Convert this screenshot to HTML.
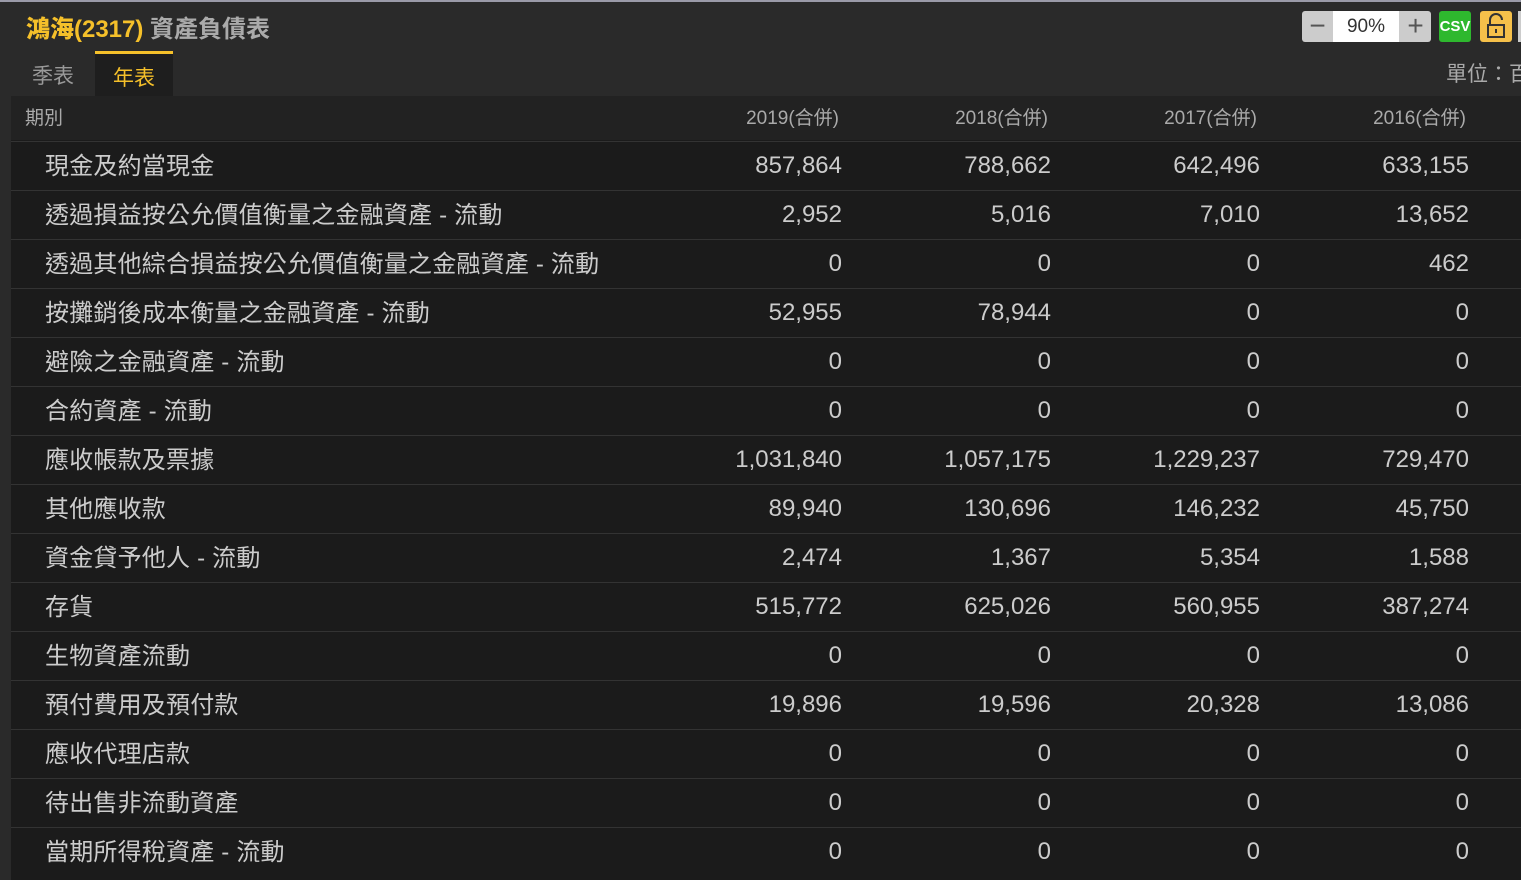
<html><head><style>
body{margin:0;width:1521px;height:873px;overflow:hidden;background:#2a2a2a;font-family:"Liberation Sans","Noto Sans CJK TC",sans-serif;position:relative}
.top{position:absolute;left:0;top:0;width:1521px;height:2px;background:#9a9aa8}
.title{position:absolute;left:26px;top:9px;font-size:24px;font-weight:bold;color:#aaa;white-space:nowrap}
.title b{color:#f5c02a}
.tab{position:absolute;top:52px;height:44px;font-size:21px;line-height:50px;text-align:center}
.t1{left:11px;width:84px;color:#999}
.t2{left:95px;width:78px;color:#f5c02a;background:#1e1e1e;border-top:3px solid #f5c02a;top:51px;height:45px;line-height:50px}
.unit{position:absolute;left:1446px;top:58px;font-size:21px;color:#aaa;white-space:nowrap}
.zoom{position:absolute;left:1302px;top:11px;width:129px;height:31px;background:#ccc;border-radius:3px}
.zoom .v{position:absolute;left:31px;top:0;width:66px;height:31px;background:#fff;font-size:19px;line-height:31px;text-align:center;color:#333}
.zoom .m{position:absolute;top:0;width:31px;height:31px;font-size:28px;line-height:30px;text-align:center;color:#555}
.csv{position:absolute;left:1439px;top:11px;width:32px;height:31px;background:#2eb82e;border-radius:3px;color:#fff;font-weight:bold;font-size:15px;line-height:31px;text-align:center}
.lock{position:absolute;left:1480px;top:11px;width:32px;height:31px;background:#f5c04a;border-radius:3px}
.edge{position:absolute;left:1518px;top:11px;width:3px;height:31px;background:#ccc}
.hd{position:absolute;left:11px;top:96px;width:1510px;height:44px;background:#222}
.bd{position:absolute;left:11px;top:140px;width:1510px;height:740px;background:#1b1b1b}
.r{position:absolute;left:11px;width:1510px;height:49px;border-top:1px solid #333;box-sizing:border-box}
.c{position:absolute;white-space:nowrap}
.h{font-size:19px;color:#aaa;top:103px}
.l{left:45px;font-size:24px;color:#ccc;letter-spacing:0.2px}
.n{font-size:24px;color:#ccc;text-align:right;width:200px}
</style></head><body>
<div class="top"></div>
<div class="title"><b>鴻海(2317)</b> 資產負債表</div>
<div class="tab t1">季表</div><div class="tab t2">年表</div>
<div class="zoom"><div class="m" style="left:0">−</div><div class="v">90%</div><div class="m" style="left:98px">+</div></div>
<div class="csv">CSV</div>
<div class="lock"><svg width="32" height="31"><path d="M10 14V9a6 6 0 0 1 12 0" fill="none" stroke="#333" stroke-width="2"/><rect x="8" y="14" width="16" height="12" fill="#f5c04a" stroke="#333" stroke-width="2"/><rect x="15" y="18" width="2" height="4" fill="#333"/></svg></div>
<div class="edge"></div>
<div class="unit">單位：百</div>
<div class="hd"></div><div class="bd"></div>
<div class="c h" style="left:25px">期別</div>
<div class="c h" style="left:639px;width:200px;text-align:right">2019(合併)</div>
<div class="c h" style="left:848px;width:200px;text-align:right">2018(合併)</div>
<div class="c h" style="left:1057px;width:200px;text-align:right">2017(合併)</div>
<div class="c h" style="left:1266px;width:200px;text-align:right">2016(合併)</div>
<div id="rows"></div>
<script>
var d=[["現金及約當現金","857,864","788,662","642,496","633,155"],
["透過損益按公允價值衡量之金融資產 - 流動","2,952","5,016","7,010","13,652"],
["透過其他綜合損益按公允價值衡量之金融資產 - 流動","0","0","0","462"],
["按攤銷後成本衡量之金融資產 - 流動","52,955","78,944","0","0"],
["避險之金融資產 - 流動","0","0","0","0"],
["合約資產 - 流動","0","0","0","0"],
["應收帳款及票據","1,031,840","1,057,175","1,229,237","729,470"],
["其他應收款","89,940","130,696","146,232","45,750"],
["資金貸予他人 - 流動","2,474","1,367","5,354","1,588"],
["存貨","515,772","625,026","560,955","387,274"],
["生物資產流動","0","0","0","0"],
["預付費用及預付款","19,896","19,596","20,328","13,086"],
["應收代理店款","0","0","0","0"],
["待出售非流動資產","0","0","0","0"],
["當期所得稅資產 - 流動","0","0","0","0"]];
var h="";var xs=[642,851,1060,1269];
for(var i=0;i<d.length;i++){var t=141+49*i;
h+='<div class="r" style="top:'+t+'px"></div>';
h+='<div class="c l" style="top:'+(t+5)+'px">'+d[i][0]+'</div>';
for(var j=0;j<4;j++)h+='<div class="c n" style="left:'+xs[j]+'px;top:'+(t+11)+'px">'+d[i][j+1]+'</div>';}
document.getElementById("rows").innerHTML=h;
</script>
</body></html>
